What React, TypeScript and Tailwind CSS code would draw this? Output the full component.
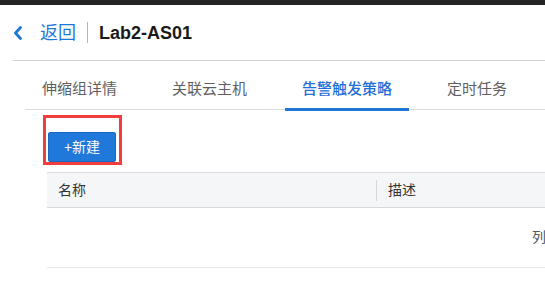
const FONT = {
  fontFamily:
    '"Liberation Sans", "Noto Sans CJK SC", "Noto Sans", sans-serif',
};

const tabs = ["伸缩组详情", "关联云主机", "告警触发策略", "定时任务"];

export default function App() {
  const active = 2;

  return (
    <div className="h-[297px] w-[545px] overflow-hidden bg-white" style={FONT}>
      <div className="h-[5px] bg-[#242424]" />

      {/* 返回 + 标题 */}
      <div className="flex h-[55px] items-center pl-[12px]">
        <ChevronLeft className="h-[14px] w-[12px] text-[#1f78d8]" />
        <span className="ml-[16px] text-[18px] leading-none text-[#1f78d8]">
          返回
        </span>
        <span className="ml-[11px] h-[21px] w-px bg-[#b5b5b5]" />
        <span className="ml-[11px] text-[18px] font-bold leading-none text-[#1a1a1a]">
          Lab2-AS01
        </span>
      </div>

      <div className="ml-[13px] border-t border-[#d6d6d6]">
        <nav className="ml-[12px] flex h-[49px] gap-[21px] border-b border-[#dedede]">
          {tabs.map((t, i) => (
            <div
              key={t}
              className={
                "relative whitespace-nowrap px-[17px] pt-[18px] text-[15px] leading-[20px] " +
                (i === active
                  ? "font-medium text-[#1f6fd8]"
                  : "text-[#5f5f5f]")
              }
            >
              {t}
              {i === active && (
                <span className="absolute bottom-[-2px] left-0 h-[3px] w-full bg-[#1f78d8]" />
              )}
            </div>
          ))}
        </nav>
      </div>

      <div className="pl-[47px]">
        <div className="-ml-1 mt-[5px] h-[50px] w-[79px] border-[3px] border-[#f23d3d] pl-[2px] pt-[14px]">
          <button
            type="button"
            className="flex h-[30px] w-[68px] items-center justify-center rounded-[2px] border border-[#1b68c4] bg-[#2079da] text-[14px] text-white"
          >
            +新建
          </button>
        </div>

        <div className="mt-[7px] w-[1026px]">
          <div className="flex h-[36px] items-center border-y border-[#d8d9de] bg-[#f5f6f8] text-[14px] text-[#333]">
            <div className="w-[329px] pl-[11px]">名称</div>
            <span className="h-[21px] w-px bg-[#d6d8dd]" />
            <div className="pl-[11px]">描述</div>
          </div>
          <div className="flex h-[60px] items-center justify-center border-b border-[#e6e7ea] text-[14px] text-[#555]">
            列表为空
          </div>
        </div>
      </div>
    </div>
  );
}

function ChevronLeft({ className }: { className?: string }) {
  return (
    <svg viewBox="0 0 12 14" fill="none" className={className}>
      <path
        d="M8.5 1.5 3.5 7l5 5.5"
        stroke="currentColor"
        strokeWidth="2.8"
        strokeLinecap="round"
        strokeLinejoin="round"
      />
    </svg>
  );
}
